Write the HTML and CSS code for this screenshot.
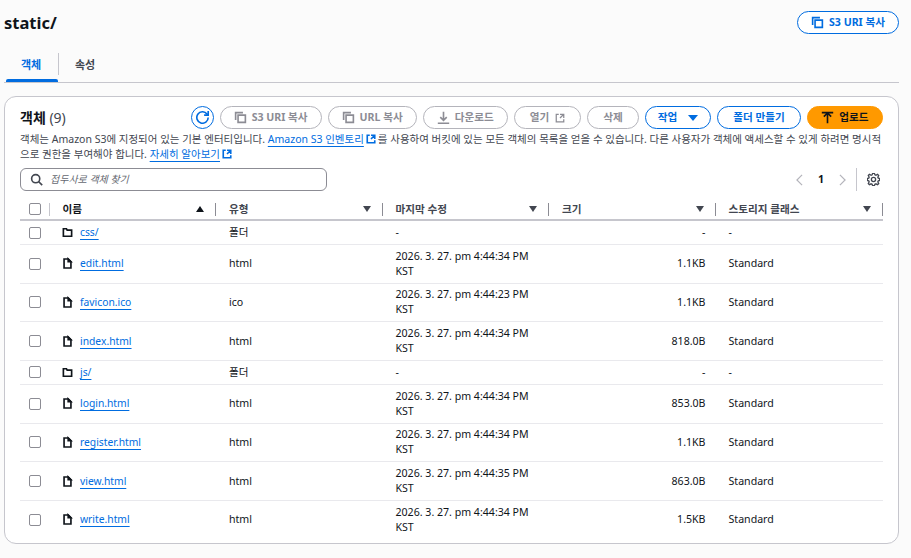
FILE: index.html
```html
<!DOCTYPE html>
<html lang="ko">
<head>
<meta charset="utf-8">
<title>static/</title>
<link rel="stylesheet" href="styles.css">
</head>
<body>
<svg class="defs" width="0" height="0" aria-hidden="true">
  <symbol id="i-copy" viewBox="0 0 16 16"><path d="M5 5h9v9H5z"/><path d="M2 11V2h9"/></symbol>
  <symbol id="i-refresh" viewBox="0 0 16 16"><path d="M10 5h5V0"/><path d="M15 8a7 7 0 1 1-1.52-4.36L15 5"/></symbol>
  <symbol id="i-download" viewBox="0 0 16 16"><path d="M1 15h14M8 1v10M4 7.5 8 11.5l4-4"/></symbol>
  <symbol id="i-ext" viewBox="0 0 16 16"><path d="M14 8V2H8M14 2 8 8M6 2H2v12h12v-4"/></symbol>
  <symbol id="i-upload" viewBox="0 0 16 16"><path d="M1 2h14M8 15V3M3.5 7 8 2.5 12.5 7"/></symbol>
  <symbol id="i-search" viewBox="0 0 16 16"><circle cx="7" cy="7" r="5"/><path d="m15 15-4.5-4.5"/></symbol>
  <symbol id="i-folder" viewBox="0 0 16 16"><path d="M2 2.5v11h12V4.5H7.5l-1-2H2Z"/></symbol>
  <symbol id="i-file" viewBox="0 0 16 16"><path d="M9 1.5H3v13h10V5.5l-4-4Z"/><path class="fill" d="M9 1.5v4h4Z"/></symbol>
  <symbol id="i-gear" viewBox="0 0 16 16"><path d="M13.3 5.2l1.1-2.1L13 1.7l-2.1 1.1c-.3-.2-.6-.3-1-.4L9.1 0.5H6.9l-.8 1.9c-.3.1-.7.2-1 .4L3 1.7 1.6 3l1.1 2.1c-.2.3-.3.6-.4 1l-1.8.8v2.2l1.8.8c.1.4.2.7.4 1L1.6 13 3 14.4l2.1-1.1c.3.2.6.3 1 .4l.8 1.8h2.2l.8-1.8c.4-.1.7-.2 1-.4l2.1 1.1 1.4-1.4-1.1-2.1c.2-.3.3-.6.4-1l1.8-.8V6.9l-1.8-.8c-.1-.3-.2-.6-.4-.9Z"/><circle cx="8" cy="8" r="2.6"/></symbol>
</svg>

<header class="page-head">
  <h1>static/</h1>
  <button class="btn btn-blue head-copy"><svg class="ic"><use href="#i-copy"/></svg>S3 URI 복사</button>
</header>

<nav class="tabs">
  <a class="tab tab-active">객체</a>
  <a class="tab">속성</a>
</nav>

<section class="card">
  <div class="card-head">
    <h2>객체 <span class="count">(9)</span></h2>
    <div class="actions">
      <button class="btn-round"><svg class="ic"><use href="#i-refresh"/></svg></button>
      <button class="btn btn-off"><svg class="ic"><use href="#i-copy"/></svg>S3 URI 복사</button>
      <button class="btn btn-off"><svg class="ic"><use href="#i-copy"/></svg>URL 복사</button>
      <button class="btn btn-off"><svg class="ic"><use href="#i-download"/></svg>다운로드</button>
      <button class="btn btn-off btn-wide">열기<svg class="ic ic-after"><use href="#i-ext"/></svg></button>
      <button class="btn btn-off btn-wide">삭제</button>
      <button class="btn btn-blue btn-menu">작업<span class="caret"></span></button>
      <button class="btn btn-blue btn-wide">폴더 만들기</button>
      <button class="btn btn-primary"><svg class="ic"><use href="#i-upload"/></svg>업로드</button>
    </div>
  </div>
  <p class="desc">객체는 Amazon S3에 지정되어 있는 기본 엔터티입니다. <a>Amazon S3 인벤토리</a><svg class="ic-link"><use href="#i-ext"/></svg>를 사용하여 버킷에 있는 모든 객체의 목록을 얻을 수 있습니다. 다른 사용자가 객체에 액세스할 수 있게 하려면 명시적<br>으로 권한을 부여해야 합니다. <a>자세히 알아보기</a><svg class="ic-link"><use href="#i-ext"/></svg></p>

  <div class="toolbar">
    <label class="search"><svg class="ic"><use href="#i-search"/></svg><span>접두사로 객체 찾기</span></label>
    <div class="pager">
      <svg class="chev" viewBox="0 0 8 14"><path d="M7 1 1 7l6 6"/></svg>
      <b>1</b>
      <svg class="chev" viewBox="0 0 8 14"><path d="M1 1l6 6-6 6"/></svg>
      <span class="pager-sep"><svg class="ic gear"><use href="#i-gear"/></svg></span>
    </div>
  </div>

  <div class="table">
    <div class="row head">
      <div class="cell c0"><i class="cb"></i></div>
      <div class="cell hc"><span>이름</span><i class="tri up"></i></div>
      <div class="cell hc"><span>유형</span><i class="tri"></i></div>
      <div class="cell hc"><span>마지막 수정</span><i class="tri"></i></div>
      <div class="cell hc"><span>크기</span><i class="tri"></i></div>
      <div class="cell hc"><span>스토리지 클래스</span><i class="tri"></i></div>
    </div>

    <div class="row folder">
      <div class="cell c0"><i class="cb"></i></div>
      <div class="cell nm"><svg class="ic"><use href="#i-folder"/></svg><a>css/</a></div>
      <div class="cell">폴더</div><div class="cell">-</div><div class="cell sz">-</div><div class="cell">-</div>
    </div>
    <div class="row">
      <div class="cell c0"><i class="cb"></i></div>
      <div class="cell nm"><svg class="ic"><use href="#i-file"/></svg><a>edit.html</a></div>
      <div class="cell">html</div><div class="cell">2026. 3. 27. pm 4:44:34 PM<br>KST</div><div class="cell sz">1.1KB</div><div class="cell">Standard</div>
    </div>
    <div class="row">
      <div class="cell c0"><i class="cb"></i></div>
      <div class="cell nm"><svg class="ic"><use href="#i-file"/></svg><a>favicon.ico</a></div>
      <div class="cell">ico</div><div class="cell">2026. 3. 27. pm 4:44:23 PM<br>KST</div><div class="cell sz">1.1KB</div><div class="cell">Standard</div>
    </div>
    <div class="row">
      <div class="cell c0"><i class="cb"></i></div>
      <div class="cell nm"><svg class="ic"><use href="#i-file"/></svg><a>index.html</a></div>
      <div class="cell">html</div><div class="cell">2026. 3. 27. pm 4:44:34 PM<br>KST</div><div class="cell sz">818.0B</div><div class="cell">Standard</div>
    </div>
    <div class="row folder">
      <div class="cell c0"><i class="cb"></i></div>
      <div class="cell nm"><svg class="ic"><use href="#i-folder"/></svg><a>js/</a></div>
      <div class="cell">폴더</div><div class="cell">-</div><div class="cell sz">-</div><div class="cell">-</div>
    </div>
    <div class="row">
      <div class="cell c0"><i class="cb"></i></div>
      <div class="cell nm"><svg class="ic"><use href="#i-file"/></svg><a>login.html</a></div>
      <div class="cell">html</div><div class="cell">2026. 3. 27. pm 4:44:34 PM<br>KST</div><div class="cell sz">853.0B</div><div class="cell">Standard</div>
    </div>
    <div class="row">
      <div class="cell c0"><i class="cb"></i></div>
      <div class="cell nm"><svg class="ic"><use href="#i-file"/></svg><a>register.html</a></div>
      <div class="cell">html</div><div class="cell">2026. 3. 27. pm 4:44:34 PM<br>KST</div><div class="cell sz">1.1KB</div><div class="cell">Standard</div>
    </div>
    <div class="row">
      <div class="cell c0"><i class="cb"></i></div>
      <div class="cell nm"><svg class="ic"><use href="#i-file"/></svg><a>view.html</a></div>
      <div class="cell">html</div><div class="cell">2026. 3. 27. pm 4:44:35 PM<br>KST</div><div class="cell sz">863.0B</div><div class="cell">Standard</div>
    </div>
    <div class="row last">
      <div class="cell c0"><i class="cb"></i></div>
      <div class="cell nm"><svg class="ic"><use href="#i-file"/></svg><a>write.html</a></div>
      <div class="cell">html</div><div class="cell">2026. 3. 27. pm 4:44:34 PM<br>KST</div><div class="cell sz">1.5KB</div><div class="cell">Standard</div>
    </div>
  </div>
</section>
</body>
</html>
```
FILE: styles.css
```css
* { box-sizing: border-box; }
html, body { margin: 0; height: 100%; }
body {
  width: 911px;
  height: 558px;
  overflow: hidden;
  background: #fbfbfb;
  color: #0f141a;
  font: 10.6px/15px "Noto Sans", "Noto Sans CJK KR", sans-serif;
  padding: 0 12px 0 4px;
}
.defs { position: absolute; }
svg { fill: none; stroke: currentColor; stroke-width: 2; }
.fill { fill: currentColor; }
.ic { width: 13px; height: 13px; flex: none; }
a { color: #006ce0; }

.page-head { display: flex; justify-content: space-between; align-items: center; height: 45px; }
h1 { margin: 0; font-size: 16.5px; line-height: 24px; font-weight: 700; }
.head-copy { height: 23px; width: 102px; }

.btn {
  display: inline-flex;
  align-items: center;
  justify-content: center;
  gap: 5px;
  height: 23px;
  padding: 0 13px;
  border-radius: 12px;
  border: 1px solid;
  background: #fff;
  font: 700 10.6px/15px "Noto Sans", "Noto Sans CJK KR", sans-serif;
  white-space: nowrap;
}
.btn-wide { padding: 0 15px; gap: 7px; }
.btn-menu { padding: 0 12px; gap: 7px; }
.btn-blue { color: #006ce0; border-color: #006ce0; }
.btn-off { color: #8c8c94; border-color: #b4b4bb; }
.btn-primary { background: #ff9900; border-color: #ff9900; color: #0f141a; padding: 0 13.5px; }
.btn-round {
  width: 23px; height: 23px; padding: 0; border-radius: 50%;
  border: 1px solid #006ce0; background: #fff; color: #006ce0;
  display: inline-flex; align-items: center; justify-content: center;
}
.caret { width: 0; height: 0; border: 5px solid transparent; border-top: 6px solid #006ce0; border-bottom: 0; margin-left: 4px; }
.ic-after { width: 10px; height: 10px; margin-left: -1px; }

.tabs { display: flex; height: 38px; padding-top: 8px; border-bottom: 1px solid #c6c6cd; align-items: stretch; }
.tab { width: 52px; padding-top: 5px; padding-left: 6px; padding-right: 8px; font-size: 11px; font-weight: 700; color: #424650; position: relative; text-align: center; line-height: 14px; }
.tab + .tab { width: 78px; padding-right: 30px; }
.tab-active { color: #006ce0; margin-left: 2px; }
.tab-active::before { content: ""; position: absolute; right: -0.5px; top: 0; height: 22px; width: 1px; background: #c6c6cd; }
.tab-active::after { content: ""; position: absolute; left: 0; right: 0; bottom: 0; height: 3px; background: #006ce0; border-radius: 2px 2px 0 0; }

.card {
  margin-top: 13px;
  width: 895px;
  height: 448px;
  background: #fff;
  border: 1px solid #c6c6cd;
  border-radius: 12px;
  padding: 9px 15px 0;
}
.card-head { display: flex; align-items: center; justify-content: space-between; height: 23px; }
h2 { margin: 0; font-size: 14px; line-height: 20px; font-weight: 700; }
.count { font-weight: 400; color: #424650; }
.actions { display: flex; gap: 6px; }

.desc { margin: 3px 0 0; color: #424650; font-size: 10.5px; line-height: 15px; width: 863px; white-space: nowrap; }
.desc a { text-decoration: underline; text-underline-offset: 3px; }
.ic-link { width: 10px; height: 10px; margin: 0 2px; color: #006ce0; stroke-width: 2.6; vertical-align: -1px; }

.toolbar { display: flex; justify-content: space-between; align-items: center; margin-top: 6px; height: 23px; width: 863px; }
.search {
  width: 307px; height: 23px;
  border: 1px solid #8c8c94; border-radius: 6px;
  display: flex; align-items: center; gap: 7px; padding-left: 9px;
  color: #424650;
}
.search span { font-style: italic; font-size: 10px; color: #656871; }
.pager { display: flex; align-items: center; color: #b4b4bb; padding-right: 3px; }
.pager b { color: #0f141a; width: 36px; text-align: center; }
.chev { width: 7px; height: 12px; stroke-width: 1.4; }
.pager-sep { margin-left: 10px; border-left: 1px solid #c6c6cd; height: 23px; padding-left: 10px; display: flex; align-items: center; color: #424650; }
.gear { stroke-width: 1.6; }

.table { margin-top: 8px; width: 863px; }
.row {
  display: grid;
  grid-template-columns: 29.5px 166.5px 166.5px 166.5px 166.5px 167.5px;
  min-height: 38.67px;
  align-items: center;
  border-bottom: 1px solid #e9e9ed;
  line-height: 15px;
}
.row.folder { min-height: 24px; }
.row.last { border-bottom: 0; min-height: 37.5px; }
.row.head { min-height: 22px; border-bottom: 2px solid #c6c6cd; color: #424650; font-weight: 700; }
.cell { padding-left: 13px; white-space: nowrap; }
.c0 { padding-left: 9px; display: flex; align-items: center; }
.cb { display: block; width: 12px; height: 12px; border: 1px solid #8c8c94; border-radius: 2px; background: #fff; }
.nm { display: flex; align-items: center; gap: 7px; padding-left: 12.5px; }
.nm .ic { width: 11px; height: 13px; stroke-width: 2.4; }
.nm a { font-size: 10.3px; text-decoration: underline; text-underline-offset: 2.5px; }
.sz { text-align: right; padding-right: 10px; }
.hc { display: flex; justify-content: space-between; align-items: center; height: 13px; border-right: 1px solid #8c8c94; padding-right: 11px; }
.head .c0 { border-right: 1px solid #c6c6cd; height: 13px; }
.head .cell:first-child + .hc span { color: #0f141a; }
.tri { width: 0; height: 0; border-left: 4px solid transparent; border-right: 4px solid transparent; border-top: 6px solid #424650; }
.tri.up { border-top: 0; border-bottom: 6px solid #0f141a; }
```
